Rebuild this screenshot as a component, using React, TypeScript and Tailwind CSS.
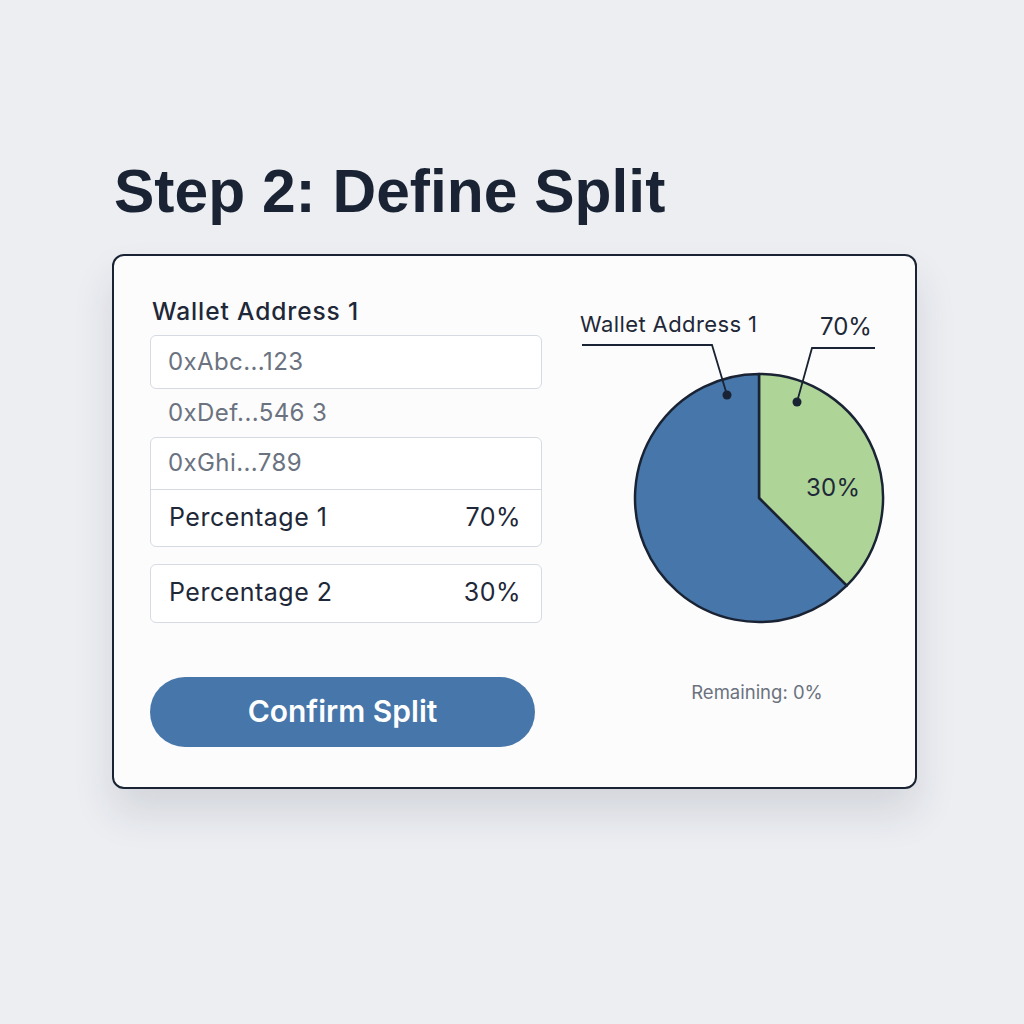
const PieChart = () => {
    const cx = 187;
    const cy = 199;
    const r = 124;
    const a = (135 * Math.PI) / 180;
    const ex = cx + r * Math.sin(a);
    const ey = cy - r * Math.cos(a);

    return (
        <svg width="340" height="330" viewBox="0 0 340 330" className="block">
            {/* slices */}
            <path
                d={`M ${cx} ${cy} L ${cx} ${cy - r} A ${r} ${r} 0 0 1 ${ex} ${ey} Z`}
                fill="#aed597"
                stroke="#1a2333"
                strokeWidth="2.5"
                strokeLinejoin="round"
            />
            <path
                d={`M ${cx} ${cy} L ${ex} ${ey} A ${r} ${r} 0 1 1 ${cx} ${cy - r} Z`}
                fill="#4676aa"
                stroke="#1a2333"
                strokeWidth="2.5"
                strokeLinejoin="round"
            />

            {/* leader lines */}
            <polyline points="10,46 140,46 155,96" fill="none" stroke="#1a2333" strokeWidth="1.8" />
            <circle cx="155" cy="96" r="4.5" fill="#1a2333" />
            <polyline points="303,49 240,49 225,103" fill="none" stroke="#1a2333" strokeWidth="1.8" />
            <circle cx="225" cy="103" r="4.5" fill="#1a2333" />

            {/* labels */}
            <text x="8" y="33" fontSize="22" letterSpacing="0.4" fill="#1e2838" fontFamily="Inter, sans-serif">
                Wallet Address 1
            </text>
            <text x="248" y="36" fontSize="24" fill="#1e2838" fontFamily="Inter, sans-serif">
                70%
            </text>
            <text x="234" y="197" fontSize="24" letterSpacing="0.3" fill="#1e2838" fontFamily="Inter, sans-serif">
                30%
            </text>
        </svg>
    );
};

const App = () => {
    return (
        <div className="min-h-screen w-full bg-[#eceef2] font-['Inter',sans-serif]">
            <div className="pl-[112px] pt-[161px]">
                <h1 className="pl-[2px] font-['Liberation_Sans',Arial,sans-serif] text-[60.5px] font-bold leading-none text-[#1a2333]">
                    Step 2: Define Split
                </h1>

                <div className="mt-[32px] flex h-[535px] w-[805px] rounded-[12px] border-2 border-[#1a2333] bg-[#fcfcfc] shadow-[0_24px_40px_rgba(30,40,60,0.12)]">
                    {/* form column */}
                    <div className="flex w-[428px] flex-col pl-[36px] pt-[40px]">
                        <label className="pl-[2px] text-[24.5px] font-medium leading-[30px] tracking-[0.9px] text-[#1e2838]">
                            Wallet Address 1
                        </label>

                        <div className="mt-[9px] flex h-[54px] w-[392px] items-center rounded-[6px] border border-[#d6dbe3] bg-white px-[17px] text-[24px] tracking-[0.4px] text-[#6b7280]">
                            0xAbc...123
                        </div>

                        <div className="flex h-[48px] items-center px-[18px] text-[24px] tracking-[0.4px] text-[#6b7280]">
                            0xDef...546 3
                        </div>

                        <div className="w-[392px] rounded-[6px] border border-[#d6dbe3] bg-white">
                            <div className="flex h-[52px] items-center border-b border-[#d6dbe3] px-[17px] text-[24px] tracking-[0.4px] text-[#6b7280]">
                                0xGhi...789
                            </div>
                            <div className="flex h-[56px] items-center justify-between px-[18px] text-[25px] tracking-[0.5px] text-[#1e2838]">
                                <span>Percentage 1</span>
                                <span className="pr-[2px]">70%</span>
                            </div>
                        </div>

                        <div className="mt-[17px] flex h-[59px] w-[392px] items-center justify-between rounded-[6px] border border-[#d6dbe3] bg-white px-[18px] text-[25px] tracking-[0.5px] text-[#1e2838]">
                            <span>Percentage 2</span>
                            <span className="pr-[2px]">30%</span>
                        </div>

                        <button className="mt-[54px] flex h-[70px] w-[385px] items-center justify-center rounded-full bg-[#4676aa] text-[30px] font-semibold text-white">
                            Confirm Split
                        </button>
                    </div>

                    {/* chart column */}
                    <div className="flex flex-col pl-[30px] pt-[43px]">
                        <PieChart />
                        <div className="mt-[50px] w-[340px] pl-[30px] text-center text-[18.5px] text-[#6b7280]">Remaining: 0%</div>
                    </div>
                </div>
            </div>
        </div>
    );
};

export default App;
